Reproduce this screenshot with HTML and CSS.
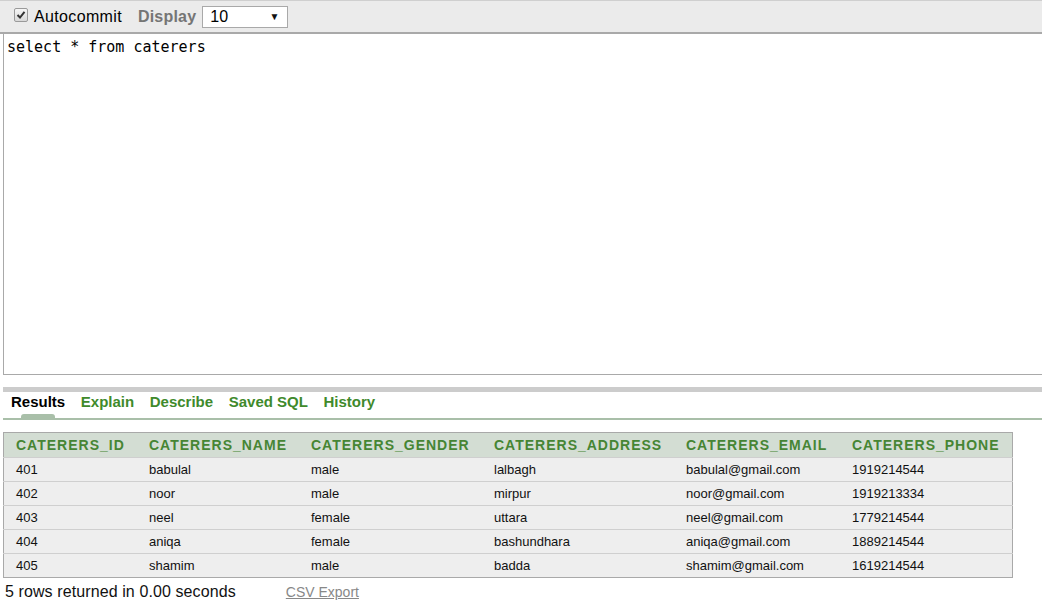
FILE: index.html
```html
<!DOCTYPE html>
<html>
<head>
<meta charset="utf-8">
<link rel="stylesheet" href="styles.css">
</head>
<body>
<div class="toolbar">
  <label class="auto"><span class="cb"><svg width="10" height="10" viewBox="0 0 10 10"><path d="M1.5 5 L4 7.5 L8.5 1.8" fill="none" stroke="#333" stroke-width="2"/></svg></span>Autocommit</label>
  <span class="disp-label">Display</span>
  <span class="select"><span>10</span><span class="arrow">▼</span></span>
</div>
<div class="editor">select * from caterers</div>
<div class="splitter"></div>
<div class="tabs">
  <span class="tab active">Results</span>
  <span class="tab">Explain</span>
  <span class="tab">Describe</span>
  <span class="tab">Saved SQL</span>
  <span class="tab">History</span>
</div>
<div class="tabline"><span class="nub"></span></div>
<table class="results">
  <thead>
    <tr><th class="c1">CATERERS_ID</th><th class="c2">CATERERS_NAME</th><th class="c3">CATERERS_GENDER</th><th class="c4">CATERERS_ADDRESS</th><th class="c5">CATERERS_EMAIL</th><th class="c6">CATERERS_PHONE</th></tr>
  </thead>
  <tbody>
    <tr><td>401</td><td>babulal</td><td>male</td><td>lalbagh</td><td>babulal@gmail.com</td><td>1919214544</td></tr>
    <tr><td>402</td><td>noor</td><td>male</td><td>mirpur</td><td>noor@gmail.com</td><td>1919213334</td></tr>
    <tr><td>403</td><td>neel</td><td>female</td><td>uttara</td><td>neel@gmail.com</td><td>1779214544</td></tr>
    <tr><td>404</td><td>aniqa</td><td>female</td><td>bashundhara</td><td>aniqa@gmail.com</td><td>1889214544</td></tr>
    <tr><td>405</td><td>shamim</td><td>male</td><td>badda</td><td>shamim@gmail.com</td><td>1619214544</td></tr>
  </tbody>
</table>
<div class="footer">
  <span class="count">5 rows returned in 0.00 seconds</span>
  <a class="csv" href="#">CSV Export</a>
</div>
</body>
</html>
```
FILE: styles.css
```css
html, body {
  margin: 0;
  padding: 0;
  background: #fff;
  overflow: hidden;
}
body {
  font-family: "Liberation Sans", Arial, sans-serif;
  color: #000;
  width: 1042px;
}
.toolbar {
  height: 31px;
  background: #ebebeb;
  border-top: 1px solid #cfcfcf;
  border-bottom: 2px solid #a9a9a9;
  display: flex;
  align-items: center;
  padding-left: 14px;
  font-size: 16px;
}
.auto {
  display: flex;
  align-items: center;
  color: #000;
  letter-spacing: 0.35px;
}
.cb {
  width: 12px;
  height: 12px;
  border: 1px solid #9a9a9a;
  border-radius: 2px;
  background: linear-gradient(#f6f6f6, #d8d8d8);
  display: flex;
  align-items: center;
  justify-content: center;
  margin-right: 6px;
  margin-top: -3px;
}
.disp-label {
  font-weight: bold;
  color: #757575;
  margin-left: 16px;
  letter-spacing: 0.2px;
}
.select {
  margin-left: 6px;
  width: 69px;
  height: 20px;
  border: 1px solid #a9a9a9;
  background: #fff;
  display: flex;
  align-items: center;
  justify-content: space-between;
  padding: 0 8px 0 7px;
  box-sizing: content-box;
  font-size: 16px;
}
.arrow {
  font-size: 10px;
  color: #111;
}
.editor {
  margin-left: 3px;
  width: 1060px;
  border: 1px solid #a9a9a9;
  border-top: none;
  font-family: "DejaVu Sans Mono", "Liberation Mono", monospace;
  font-size: 15px;
  padding: 4px 3px;
  box-sizing: border-box;
  height: 341px;
  line-height: 18px;
}
.splitter {
  margin: 12px 0 0 3px;
  height: 5px;
  background: #cccccc;
}
.tabs {
  display: flex;
  padding-left: 11px;
  height: 19px;
  align-items: center;
}
.tab {
  font-size: 15px;
  font-weight: bold;
  color: #3f8a2c;
  margin-right: 15.6px;
}
.tab.active {
  color: #000;
}
.tabline {
  margin: 7px 0 0 3px;
  height: 2px;
  background: #a9bfa9;
  position: relative;
}
.nub {
  position: absolute;
  left: 18px;
  top: -4px;
  width: 34px;
  height: 5px;
  background: #a9bfa9;
  border-radius: 3px 3px 0 0;
}
.results {
  margin: 12px 0 0 3px;
  width: 1010px;
  border-collapse: collapse;
  border: 1px solid #a9a9a9;
  font-size: 13px;
}
.results th {
  background: #d3ddd3;
  color: #468534;
  font-size: 14px;
  font-weight: bold;
  letter-spacing: 1px;
  text-align: left;
  height: 24px;
  padding: 0 0 0 12px;
  white-space: nowrap;
}
.results td {
  background: #eeeeee;
  height: 23px;
  padding: 0 0 0 12px;
  border-top: 1px solid #cfcfcf;
  color: #111;
}
.results .c1 { width: 121px; }
.results .c2 { width: 150px; }
.results .c3 { width: 171px; }
.results .c4 { width: 180px; }
.results .c5 { width: 154px; }
.footer {
  display: flex;
  align-items: center;
  padding-left: 5px;
  height: 28px;
}
.count {
  font-size: 16px;
  color: #111;
  letter-spacing: 0.1px;
}
.csv {
  margin-left: 50px;
  font-size: 14px;
  color: #888;
  text-decoration: underline;
}
```
